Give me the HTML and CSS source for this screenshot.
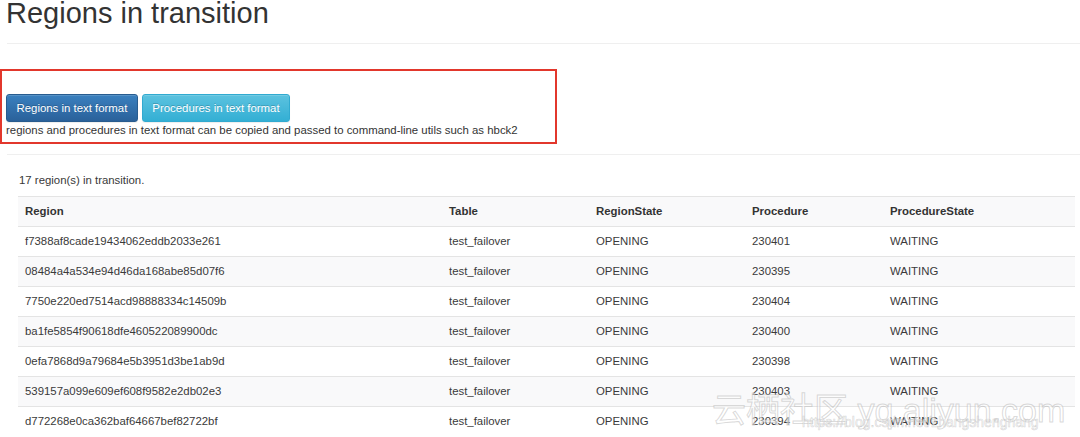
FILE: index.html
```html
<!DOCTYPE html>
<html>
<head>
<meta charset="utf-8">
<link rel="stylesheet" href="styles.css">
</head>
<body>
<div class="page">
  <h1 class="title">Regions in transition</h1>
  <hr class="rule rule-top">
  <div class="highlight">
    <div class="btns">
      <button class="btn btn-primary">Regions in text format</button>
      <button class="btn btn-info">Procedures in text format</button>
    </div>
    <p class="hint">regions and procedures in text format can be copied and passed to command-line utils such as hbck2</p>
  </div>
  <hr class="rule rule-mid">
  <div class="section">
    <p class="count">17 region(s) in transition.</p>
    <table class="rit">
      <colgroup>
        <col class="c1"><col class="c2"><col class="c3"><col class="c4"><col class="c5">
      </colgroup>
      <tr><th>Region</th><th>Table</th><th>RegionState</th><th>Procedure</th><th>ProcedureState</th></tr>
      <tr><td>f7388af8cade19434062eddb2033e261</td><td>test_failover</td><td>OPENING</td><td>230401</td><td>WAITING</td></tr>
      <tr><td>08484a4a534e94d46da168abe85d07f6</td><td>test_failover</td><td>OPENING</td><td>230395</td><td>WAITING</td></tr>
      <tr><td>7750e220ed7514acd98888334c14509b</td><td>test_failover</td><td>OPENING</td><td>230404</td><td>WAITING</td></tr>
      <tr><td>ba1fe5854f90618dfe460522089900dc</td><td>test_failover</td><td>OPENING</td><td>230400</td><td>WAITING</td></tr>
      <tr><td>0efa7868d9a79684e5b3951d3be1ab9d</td><td>test_failover</td><td>OPENING</td><td>230398</td><td>WAITING</td></tr>
      <tr><td>539157a099e609ef608f9582e2db02e3</td><td>test_failover</td><td>OPENING</td><td>230403</td><td>WAITING</td></tr>
      <tr><td>d772268e0ca362baf64667bef82722bf</td><td>test_failover</td><td>OPENING</td><td>230394</td><td>WAITING</td></tr>
    </table>
  </div>
</div>
<div class="watermark">
  <span class="wm-big">云栖社区 yq.aliyun.com</span>
  <span class="wm-small">https://blog.csdn.net/zhangshenghang</span>
</div>
</body>
</html>
```

FILE: styles.css
```css
html, body {
  margin: 0;
  padding: 0;
  background: #ffffff;
}
body {
  position: relative;
  width: 1080px;
  height: 437px;
  overflow: hidden;
  font-family: "Liberation Sans", Arial, "Noto Sans CJK SC", sans-serif;
  font-size: 11.4px;
  color: #383838;
}
.page {
  display: flex;
  flex-direction: column;
}
.title {
  margin: 0 0 0 6px;
  font-size: 29px;
  line-height: 26px;
  font-weight: normal;
  color: #333333;
}
.rule {
  margin: 0 0 0 7px;
  border: 0;
  border-top: 1px solid #efefef;
  height: 0;
}
.rule-top {
  margin-top: 17px;
}
.rule-mid {
  margin-top: 10px;
}
.highlight {
  margin-top: 25px;
  width: 549px;
  border: 2px solid #e2372c;
  padding: 23px 0 4px 4px;
}
.btns {
  display: flex;
  gap: 4px;
}
.btn {
  height: 28px;
  padding: 0 9.5px;
  font-family: inherit;
  font-size: 11.4px;
  color: #ffffff;
  border-radius: 3px;
  text-shadow: 0 -1px 0 rgba(0, 0, 0, 0.2);
  box-shadow: inset 0 1px 0 rgba(255, 255, 255, 0.15), 0 1px 1px rgba(0, 0, 0, 0.075);
  cursor: pointer;
}
.btn-primary {
  background: linear-gradient(to bottom, #3a80bf 0%, #2a619a 100%);
  border: 1px solid #285c8f;
}
.btn-info {
  background: linear-gradient(to bottom, #5cc2df 0%, #33afd4 100%);
  border: 1px solid #31aad0;
}
.hint {
  margin: 0;
  line-height: 16px;
  color: #333333;
}
.section {
  padding-left: 18px;
}
.count {
  margin: 16.5px 0 8px 1px;
  line-height: 16px;
}
.rit {
  width: 1057px;
  border-collapse: collapse;
  table-layout: fixed;
}
.c1 { width: 424px; }
.c2 { width: 147px; }
.c3 { width: 156px; }
.c4 { width: 138px; }
.c5 { width: 192px; }
.rit th, .rit td {
  padding: 6px 7px;
  line-height: 17px;
  text-align: left;
  border-top: 1px solid #e4e4e4;
  white-space: nowrap;
  color: #3a3a3a;
}
.rit th {
  font-weight: bold;
  color: #333333;
}
.rit tr:nth-child(odd) {
  background: #f9f9fa;
}
.watermark {
  position: absolute;
  left: 712px;
  top: 390px;
  width: 368px;
  height: 47px;
  pointer-events: none;
}
.wm-big {
  position: absolute;
  left: 0;
  top: 0;
  font-size: 34px;
  line-height: 40px;
  white-space: nowrap;
  color: rgba(255, 255, 255, 0.55);
  -webkit-text-stroke: 1px rgba(160, 160, 160, 0.4);
}
.wm-small {
  position: absolute;
  left: 90px;
  top: 24px;
  font-size: 14px;
  line-height: 16px;
  white-space: nowrap;
  color: rgba(255, 255, 255, 0.6);
  -webkit-text-stroke: 0.6px rgba(150, 150, 150, 0.4);
}
```
